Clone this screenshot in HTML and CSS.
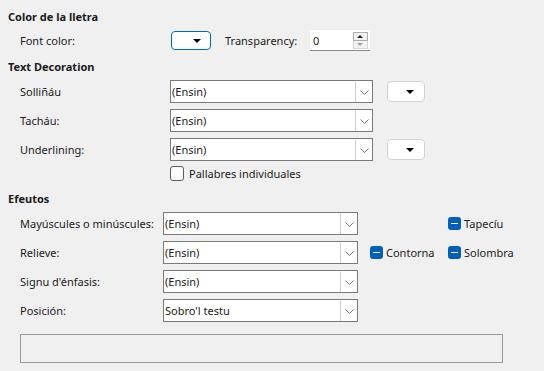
FILE: index.html
```html
<!DOCTYPE html>
<html lang="ast">
<head>
    <meta charset="UTF-8">
    <title>Efeutos de fonte</title>
    <link rel="stylesheet" href="styles.css">
</head>
<body>
    <div class="panel">
        <h2 class="title title-first">Color de la lletra</h2>
        <div class="row row-color">
            <span class="label">Font color:</span>
            <button class="color-btn focused"><span class="tri"></span></button>
            <span class="trans-label">Transparency:</span>
            <div class="spin">
                <span class="spin-value">0</span>
                <div class="spin-btns">
                    <span class="spin-up"></span>
                    <span class="spin-down"></span>
                </div>
            </div>
        </div>

        <h2 class="title title-deco">Text Decoration</h2>
        <div class="deco">
            <div class="row">
                <span class="label">Solliñáu</span>
                <div class="combo"><span class="combo-text">(Ensin)</span><span class="combo-btn"><svg width="9" height="5" viewBox="0 0 9 5"><path d="M0.5 0.5 L4.5 4.5 L8.5 0.5" fill="none" stroke="#777" stroke-width="1"/></svg></span></div>
                <button class="color-btn side"><span class="tri"></span></button>
            </div>
            <div class="row">
                <span class="label">Tacháu:</span>
                <div class="combo"><span class="combo-text">(Ensin)</span><span class="combo-btn"><svg width="9" height="5" viewBox="0 0 9 5"><path d="M0.5 0.5 L4.5 4.5 L8.5 0.5" fill="none" stroke="#777" stroke-width="1"/></svg></span></div>
            </div>
            <div class="row">
                <span class="label">Underlining:</span>
                <div class="combo"><span class="combo-text">(Ensin)</span><span class="combo-btn"><svg width="9" height="5" viewBox="0 0 9 5"><path d="M0.5 0.5 L4.5 4.5 L8.5 0.5" fill="none" stroke="#777" stroke-width="1"/></svg></span></div>
                <button class="color-btn side"><span class="tri"></span></button>
            </div>
            <label class="check-row">
                <span class="check"></span>
                <span>Pallabres individuales</span>
            </label>
        </div>

        <h2 class="title title-fx">Efeutos</h2>
        <div class="fx">
            <div class="row">
                <span class="label label-fx">Mayúscules o minúscules:</span>
                <div class="combo combo-fx"><span class="combo-text">(Ensin)</span><span class="combo-btn"><svg width="9" height="5" viewBox="0 0 9 5"><path d="M0.5 0.5 L4.5 4.5 L8.5 0.5" fill="none" stroke="#777" stroke-width="1"/></svg></span></div>
                <span class="opt opt-empty"></span>
                <span class="opt"><span class="tri-check"></span>Tapecíu</span>
            </div>
            <div class="row">
                <span class="label label-fx">Relieve:</span>
                <div class="combo combo-fx"><span class="combo-text">(Ensin)</span><span class="combo-btn"><svg width="9" height="5" viewBox="0 0 9 5"><path d="M0.5 0.5 L4.5 4.5 L8.5 0.5" fill="none" stroke="#777" stroke-width="1"/></svg></span></div>
                <span class="opt opt-first"><span class="tri-check"></span>Contorna</span>
                <span class="opt"><span class="tri-check"></span>Solombra</span>
            </div>
            <div class="row">
                <span class="label label-fx">Signu d'énfasis:</span>
                <div class="combo combo-fx"><span class="combo-text">(Ensin)</span><span class="combo-btn"><svg width="9" height="5" viewBox="0 0 9 5"><path d="M0.5 0.5 L4.5 4.5 L8.5 0.5" fill="none" stroke="#777" stroke-width="1"/></svg></span></div>
            </div>
            <div class="row">
                <span class="label label-fx">Posición:</span>
                <div class="combo combo-fx"><span class="combo-text">Sobro'l testu</span><span class="combo-btn"><svg width="9" height="5" viewBox="0 0 9 5"><path d="M0.5 0.5 L4.5 4.5 L8.5 0.5" fill="none" stroke="#777" stroke-width="1"/></svg></span></div>
            </div>
        </div>

        <div class="preview"></div>
    </div>
</body>
</html>
```

FILE: styles.css
```css
body {
    margin: 0;
    background-color: #f0f0f0;
    font-family: 'Segoe UI', 'Noto Sans', sans-serif;
    font-size: 11px;
    color: #1b1b1b;
    white-space: nowrap;
}

.panel {
    padding: 9px 8px 0 8px;
}

.title {
    margin: 0;
    font-size: 11px;
    font-weight: bold;
    line-height: 16px;
    height: 16px;
}

.title-deco {
    margin-top: 8px;
}

.title-fx {
    margin-top: 10px;
}

.row {
    display: flex;
    align-items: center;
    height: 23px;
    margin-top: 6px;
    padding-left: 12px;
}

.row-color {
    margin-top: 5px;
    height: 21px;
}

.deco .row:first-child,
.fx .row:first-child {
    margin-top: 5px;
}

.label {
    width: 150px;
    flex-shrink: 0;
}

.label-fx {
    width: 143px;
}

/* colour drop buttons */
.color-btn {
    display: flex;
    align-items: center;
    justify-content: flex-end;
    width: 38px;
    height: 21px;
    padding: 0 10px 0 0;
    background: white;
    border: 1px solid #d3d3d3;
    border-radius: 4px;
}

.color-btn.focused {
    width: 40px;
    height: 19px;
    margin-left: 1px;
    border-color: #0067c0;
    padding-right: 9px;
}

.color-btn.side {
    margin-left: 14px;
}

.tri {
    width: 0;
    height: 0;
    border-left: 4px solid transparent;
    border-right: 4px solid transparent;
    border-top: 4px solid #000;
}

.trans-label {
    margin-left: 14px;
    width: 85px;
}

.spin {
    display: flex;
    align-items: center;
    justify-content: space-between;
    width: 60px;
    height: 21px;
    box-sizing: border-box;
    background: white;
    border-bottom: 1px solid #8a8a8a;
    padding-left: 3px;
    padding-right: 2px;
}

.spin-btns {
    display: flex;
    flex-direction: column;
    width: 15px;
    height: 17px;
}

.spin-up,
.spin-down {
    flex: 1;
    position: relative;
    border: 1px solid #adadad;
    background: #f3f3f3;
}

.spin-down {
    border-color: #d6d6d6;
    border-top: none;
}

.spin-up::after,
.spin-down::after {
    content: '';
    position: absolute;
    left: 3px;
    top: 2px;
    border-left: 3px solid transparent;
    border-right: 3px solid transparent;
}

.spin-up::after {
    border-bottom: 3px solid #222;
}

.spin-down::after {
    top: 2px;
    border-top: 3px solid #a0a0a0;
}

/* combo boxes */
.combo {
    display: flex;
    align-items: stretch;
    justify-content: space-between;
    width: 203px;
    height: 23px;
    box-sizing: border-box;
    background: white;
    border: 1px solid #7a7a7a;
}

.combo-fx {
    width: 195px;
}

.combo-text {
    display: flex;
    align-items: center;
    padding-left: 1px;
}

.combo-btn {
    display: flex;
    align-items: center;
    justify-content: center;
    width: 16px;
    border-left: 1px solid #d0d0d0;
    border-top: 1px solid #fff;
}

.check-row {
    display: flex;
    align-items: center;
    gap: 5px;
    height: 16px;
    margin-top: 4px;
    padding-left: 162px;
}

.check {
    width: 12px;
    height: 13px;
    border: 1px solid #5d5d5d;
    border-radius: 3px;
    background: #fbfbfb;
}

.opt {
    display: flex;
    align-items: center;
    gap: 3px;
}

.opt-empty {
    width: 90px;
}

.opt-first {
    margin-left: 12px;
    width: 78px;
}

.tri-check {
    position: relative;
    width: 13px;
    height: 13px;
    border-radius: 3px;
    background: #005fb8;
}

.tri-check::after {
    content: '';
    position: absolute;
    left: 3px;
    top: 6px;
    width: 7px;
    height: 1px;
    background: white;
}

.preview {
    height: 29px;
    margin: 12px 33px 0 12px;
    box-sizing: border-box;
    border: 1px solid #9a9a9a;
    background: #f0f0f0;
}
```
